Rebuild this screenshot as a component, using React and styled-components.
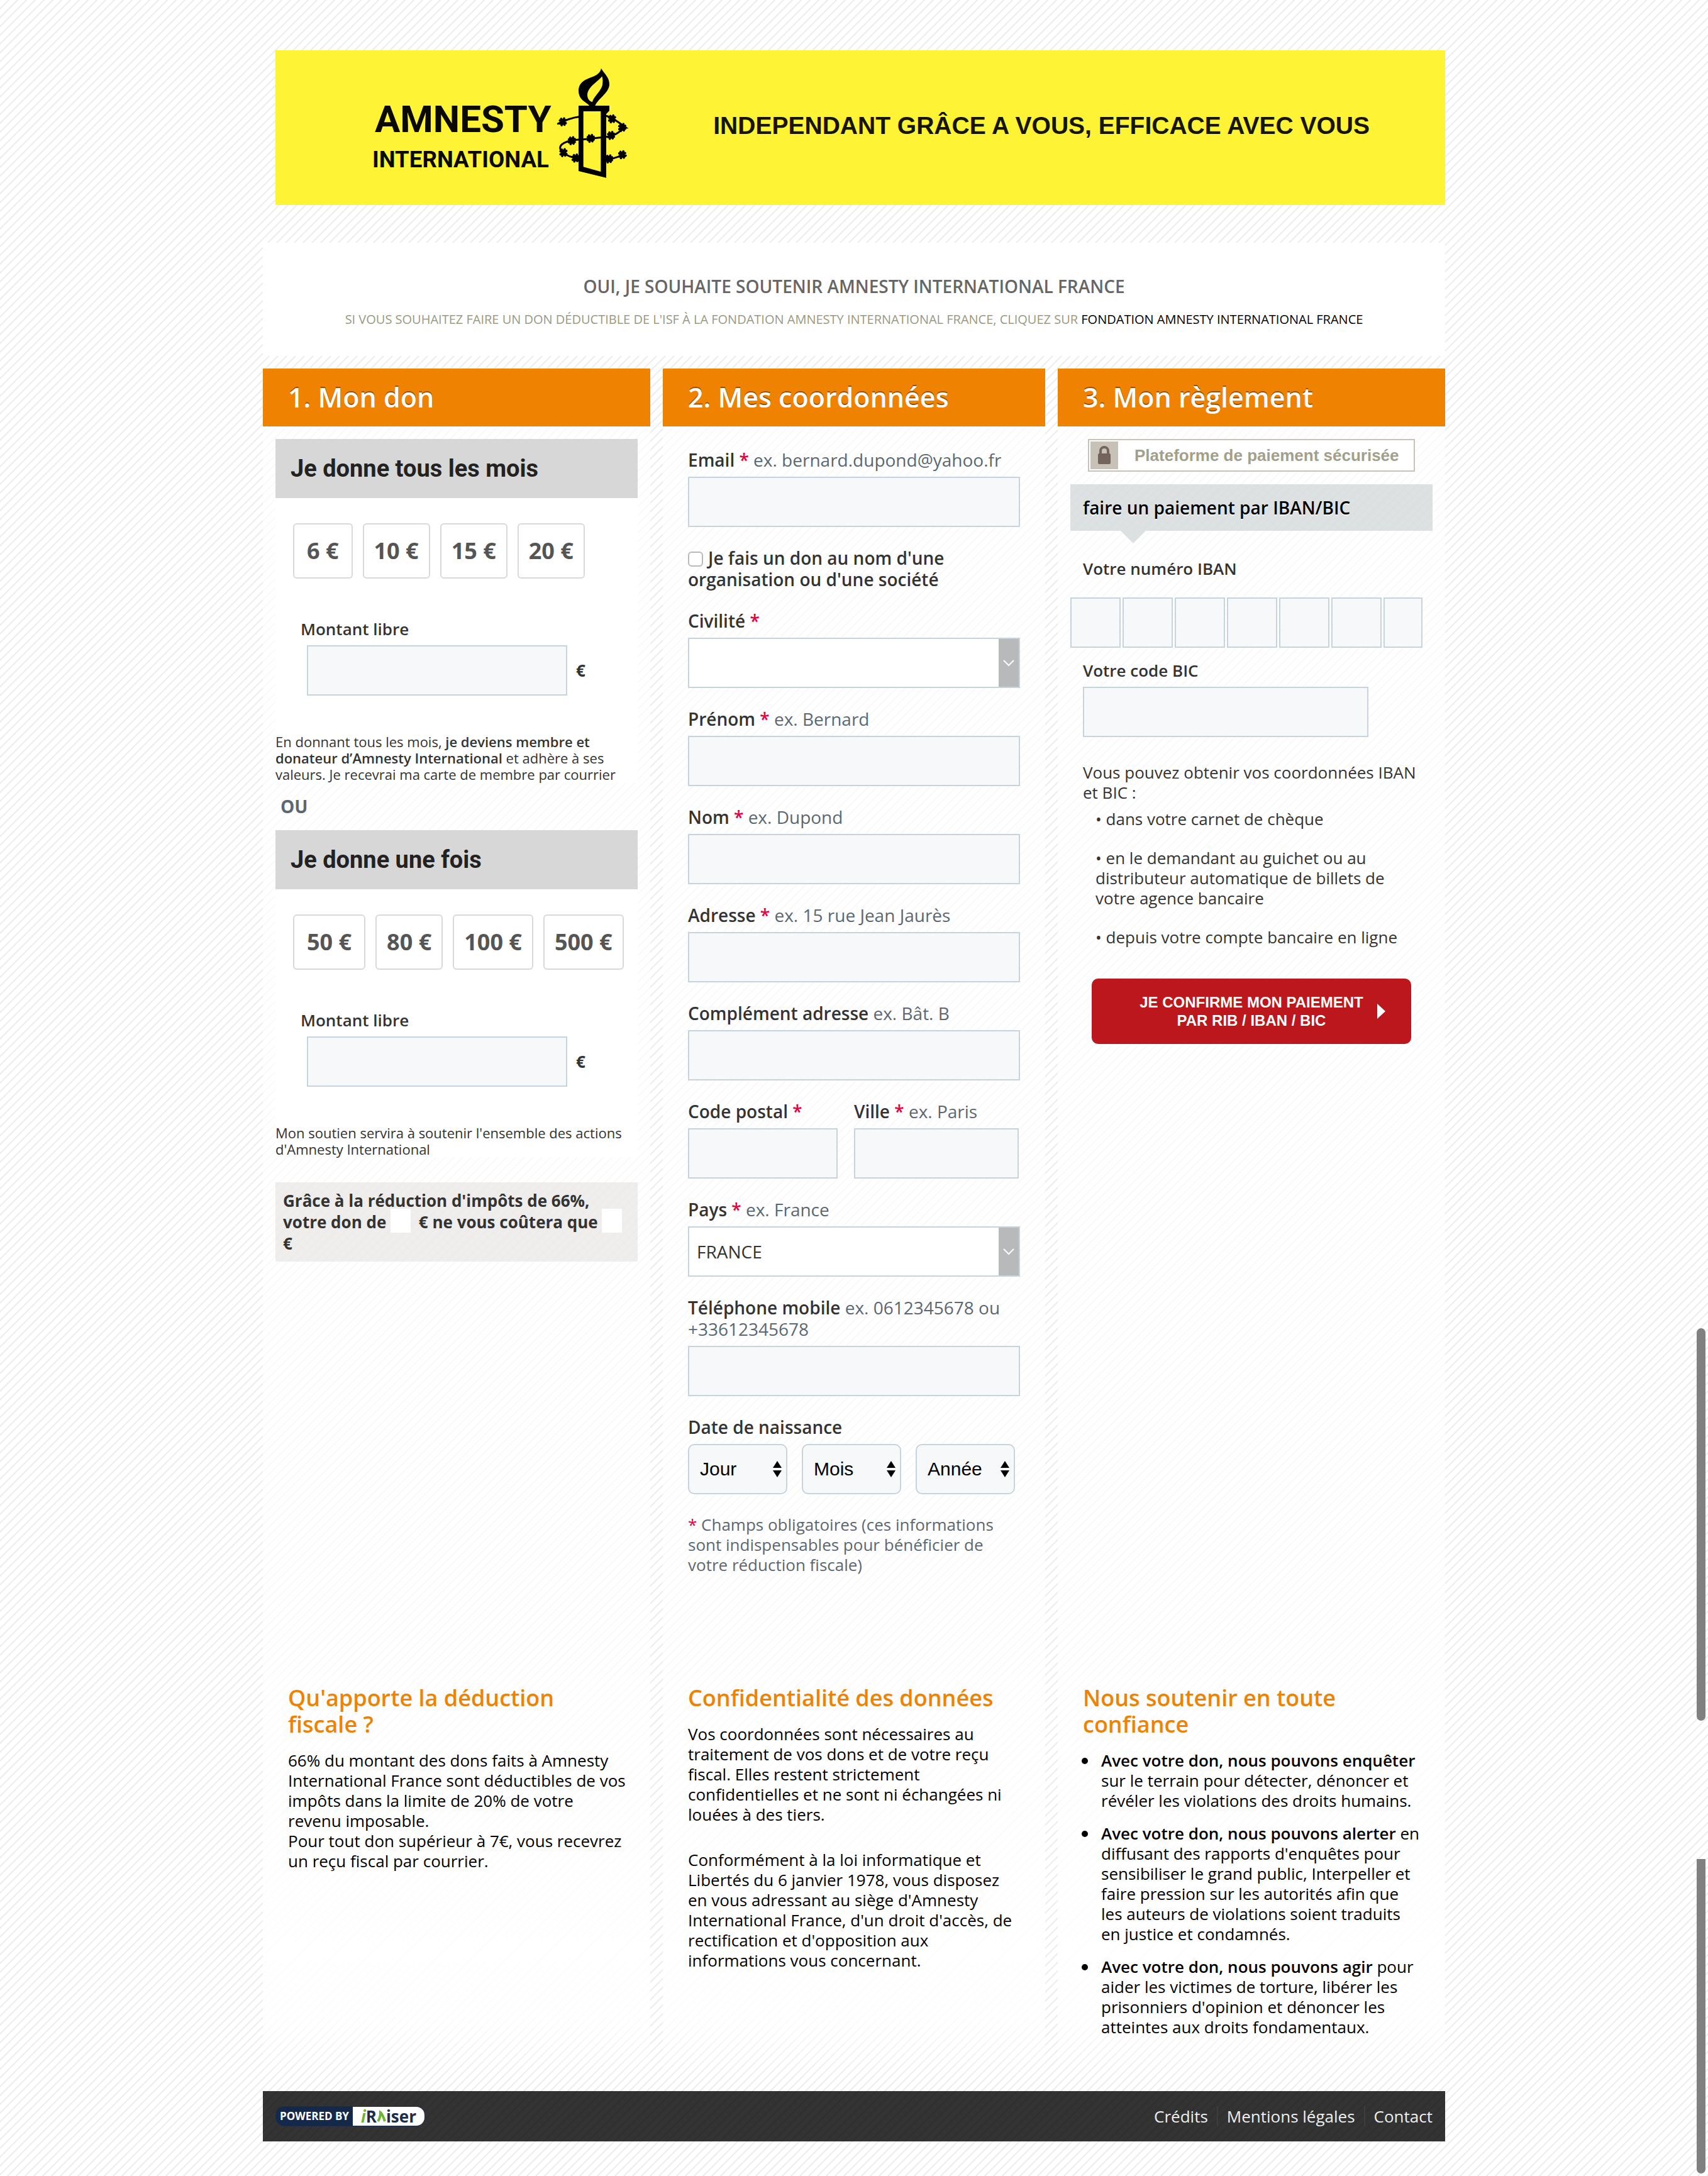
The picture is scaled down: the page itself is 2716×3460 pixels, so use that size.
import React from "react";
import styled, { createGlobalStyle, css } from "styled-components";

const sans = `"Open Sans", "Noto Sans", sans-serif`;
const arial = `"Liberation Sans", Arial, sans-serif`;

const GlobalStyle = createGlobalStyle`
  * { box-sizing: border-box; }
  body {
    margin: 0;
    color: #333;
    font-family: ${sans};
    font-size: 26px;
    line-height: 32px;
    background-color: #fff;
    background-image: linear-gradient(
      135deg,
      #ececec 0 3%,
      #fff 7% 43%,
      #ececec 47% 53%,
      #fff 57% 93%,
      #ececec 97% 100%
    );
    background-size: 14px 14px;
  }
  h1, h2, h3, p, ul, fieldset { margin: 0; padding: 0; }
  input, select, button { font: inherit; margin: 0; }
`;

const Page = styled.div`
  max-width: 1880px;
  margin: 0 auto;
  padding: 80px 0 54px;
`;

/* ---------- Banner ---------- */

const Banner = styled.header`
  display: flex;
  justify-content: space-between;
  align-items: flex-start;
  margin-left: 20px;
  height: 246px;
  padding: 20px 120px 0 142px;
  background: #fff335;
`;

const Slogan = styled.p`
  padding-top: 78px;
  font: bold 39px/44px ${arial};
  color: #151500;
`;

const barbs = [
  [945, 461], [1180, 447], [1228, 488], [1175, 526], [1078, 540],
  [988, 551], [948, 608], [1006, 634], [1165, 638], [1228, 618],
];

function AmnestyLogo() {
  return (
    <svg width="430" height="196" viewBox="0 180 1290 588" role="img" aria-label="Amnesty International">
      <g fontFamily="Roboto, sans-serif" fontWeight="bold" fill="#0a0a00">
        <text x="48" y="510" fontSize="180">AMNESTY</text>
        <text x="36" y="678" fontSize="110">INTERNATIONAL</text>
      </g>
      <path
        fill="#000"
        fillRule="evenodd"
        d="M1128 206 C1142 232 1168 248 1167 284 C1164 326 1108 352 1097 390 L1076 392 C1070 368 1020 366 1020 312 C1021 270 1056 258 1088 246 C1112 236 1124 224 1128 206 Z
           M1132 244 C1116 268 1062 294 1062 334 C1062 352 1074 366 1086 366 C1090 342 1130 312 1134 284 C1136 268 1136 256 1132 244 Z"
      />
      <path
        fill="#000"
        fillRule="evenodd"
        d="M1020 384 H1167 V408 L1152 424 V728 L1020 696 Z M1043 411 V676 L1126 699 V411 Z"
      />
      <g fill="none" stroke="#000" strokeWidth="9" strokeLinecap="round">
        <path d="M1022 437 C990 440 960 452 922 470" />
        <path d="M1150 432 C1180 440 1216 466 1246 489 C1222 490 1220 524 1150 533 L1040 545 C985 545 932 560 932 586 C934 612 980 630 1024 638" />
        <path d="M1148 640 C1184 644 1204 622 1246 622" />
        {barbs.map(([x, y]) => (
          <path key={`${x}-${y}`} strokeWidth="11" d={`M${x - 14} ${y + 8} L${x + 14} ${y - 8} M${x - 8} ${y - 14} L${x + 8} ${y + 14} M${x + 6} ${y - 16} L${x - 6} ${y + 16} M${x - 14} ${y - 6} L${x + 14} ${y + 6}`} />
        ))}
      </g>
    </svg>
  );
}

/* ---------- Intro ---------- */

const Intro = styled.section`
  margin: 60px 0 20px;
  padding: 50px 20px 44px;
  background: #fff;
  text-align: center;
  text-transform: uppercase;
`;

const IntroTitle = styled.h1`
  font-size: 28px;
  line-height: 38px;
  font-weight: 600;
  color: #666;
`;

const IntroNote = styled.p`
  margin-top: 20px;
  font-size: 20px;
  line-height: 28px;
  color: #999980;

  a { color: #000; text-decoration: none; }
`;

/* ---------- Columns ---------- */

const Columns = styled.div`
  display: grid;
  grid-template-columns: 616fr 608fr 616fr;
  column-gap: 20px;
`;

const Panel = styled.section`
  min-width: 0;
  background: rgba(255, 255, 255, 0.7);
`;

const PanelTitle = styled.h2`
  height: 92px;
  padding: 0 40px;
  background: #ef8200;
  color: #fff;
  font-size: 43px;
  line-height: 92px;
  font-weight: 600;
  text-shadow: 0 -2px 0 rgba(0, 0, 0, 0.4);
`;

const Info = styled.section`
  padding: 35px 36px 66px 40px;
  color: #000;
  background: linear-gradient(
    rgba(255, 255, 255, 0.7),
    rgba(255, 255, 255, 0.92) 70%,
    rgba(255, 255, 255, 0.85) 85%,
    rgba(255, 255, 255, 0)
  );

  h3 {
    margin-bottom: 20px;
    font-size: 36px;
    line-height: 42px;
    font-weight: 600;
    color: #ef8200;
  }
  p + p { margin-top: 40px; }
  strong { font-weight: 600; }
`;

const BulletList = styled.ul`
  display: grid;
  gap: 20px;
  padding-left: 29px;
  list-style: none;

  li::before {
    content: "";
    float: left;
    width: 10px;
    height: 10px;
    margin: 12px 0 0 -31px;
    border-radius: 50%;
    background: #000;
  }
`;

/* ---------- Shared form parts ---------- */

const boxed = css`
  height: 80px;
  border: 2px solid #c6d4de;
  border-radius: 0;
  background: #f7f8fa;
  outline: none;
`;

const TextInput = styled.input`
  ${boxed}
  display: block;
  width: ${(p) => p.$width || "100%"};
  padding: 0 12px;
  font-size: 28px;
  color: #333;
`;

const Required = styled.span`
  color: #e8003d;
`;

const Hint = styled.span`
  font-weight: 400;
  color: #5b6873;
`;

const Label = styled.label`
  display: block;
  margin-bottom: 10px;
  font-size: ${(p) => (p.$small ? "26px" : "28px")};
  line-height: ${(p) => (p.$small ? "32px" : "34px")};
  font-weight: 600;
  color: #333;
`;

/* ---------- Donation ---------- */

const DonationBody = styled.div`
  padding: 20px 20px 0;
`;

const DonationTitle = styled.h3`
  height: 94px;
  padding: 0 24px;
  background: #d7d7d7;
  color: #222;
  font: bold 38px/94px Roboto, sans-serif;
`;

const DonationCard = styled.div`
  padding-top: 40px;
  background: #fff;
`;

const Amounts = styled.div`
  display: flex;
  gap: 16px;
  padding-left: 28px;
`;

const AmountButton = styled.button`
  height: 88px;
  padding: 0 16px;
  border: 2px solid #d9d9d9;
  border-radius: 6px;
  background: #fff;
  color: #555;
  font-size: 36px;
  font-weight: 700;
  white-space: nowrap;

  &:first-child { padding: 0 20px; }
`;

const FreeAmount = styled.div`
  padding: 64px 40px 60px;
`;

const AmountRow = styled.div`
  display: flex;
  align-items: center;
  gap: 14px;
  padding-left: 10px;
  font-weight: 700;
`;

const SmallPrint = styled.p`
  font-size: 22px;
  line-height: 26px;

  strong { font-weight: 600; }
`;

const Or = styled.p`
  padding: 21px 8px;
  font-size: 28px;
  line-height: 34px;
  font-weight: 700;
  color: #5b6873;
`;

const TaxNote = styled.p`
  margin-top: 40px;
  padding: 12px;
  background: rgba(226, 224, 220, 0.55);
  font-weight: 700;
  line-height: 34px;
`;

const TaxValue = styled.input`
  width: 32px;
  height: 38px;
  margin: -4px 6px 0 0 !important;
  padding: 0;
  border: 0;
  background: #fff;
  vertical-align: bottom;
`;

function Donation({ id, title, amounts, children }) {
  return (
    <>
      <DonationTitle>{title}</DonationTitle>
      <DonationCard>
        <Amounts>
          {amounts.map((a) => (
            <AmountButton type="button" key={a}>{a} €</AmountButton>
          ))}
        </Amounts>
        <FreeAmount>
          <Label $small htmlFor={id}>Montant libre</Label>
          <AmountRow>
            <TextInput id={id} $width="414px" /> €
          </AmountRow>
        </FreeAmount>
        <SmallPrint>{children}</SmallPrint>
      </DonationCard>
    </>
  );
}

/* ---------- Contact details ---------- */

const Fields = styled.div`
  display: grid;
  gap: 32px;
  padding: 36px 40px 140px;
`;

const SplitRow = styled.div`
  display: grid;
  grid-template-columns: 238fr 262fr;
  gap: 26px;
  padding-right: 2px;
`;

const CheckLabel = styled.label`
  font-size: 28px;
  line-height: 34px;
  font-weight: 600;
`;

const Check = styled.input`
  appearance: none;
  width: 24px;
  height: 24px;
  margin: 0 8px 0 0 !important;
  border: 2px solid #b9b9b9;
  border-radius: 6px;
  background: #fff;
  vertical-align: -3px;
`;

const SelectWrap = styled.div`
  position: relative;
`;

const WideSelect = styled.select`
  ${boxed}
  appearance: none;
  display: block;
  width: 100%;
  padding: 0 44px 0 12px;
  background: #fff;
  font-size: 28px;
  color: #333;
`;

const SelectHandle = styled.span`
  position: absolute;
  top: 2px;
  right: 2px;
  bottom: 2px;
  display: flex;
  align-items: center;
  justify-content: center;
  width: 32px;
  background: #b8b9bb;
  pointer-events: none;
`;

const DateRow = styled.div`
  display: flex;
  gap: 23px;
`;

const DateSelect = styled.select`
  ${boxed}
  appearance: none;
  width: 158px;
  padding: 0 34px 0 17px;
  border-radius: 10px;
  font-family: ${arial};
  font-size: 30px;
  color: #000;
`;

const Spinner = styled.svg`
  position: absolute;
  top: 27px;
  right: 9px;
  pointer-events: none;
`;

const BirthFieldset = styled.fieldset`
  border: 0;
  min-width: 0;
`;

const Legend = styled.legend`
  padding: 0 0 10px;
  font-size: 28px;
  line-height: 34px;
  font-weight: 600;
`;

const Mandatory = styled.p`
  color: #5b6873;
`;

function Field({ id, label, required, hint }) {
  return (
    <div>
      <FieldLabel id={id} label={label} required={required} hint={hint} />
      <TextInput id={id} />
    </div>
  );
}

function FieldLabel({ id, label, required, hint }) {
  return (
    <Label htmlFor={id}>
      {label}
      {required && <Required> *</Required>}
      {hint && <Hint> {hint}</Hint>}
    </Label>
  );
}

function SelectField({ id, label, hint, value }) {
  return (
    <div>
      <FieldLabel id={id} label={label} required hint={hint} />
      <SelectWrap>
        <WideSelect id={id}>
          <option>{value}</option>
        </WideSelect>
        <SelectHandle>
          <svg width="18" height="12" viewBox="0 0 18 12" fill="none" stroke="#fff" strokeWidth="2">
            <path d="M1 2 L9 10 L17 2" />
          </svg>
        </SelectHandle>
      </SelectWrap>
    </div>
  );
}

function DatePart({ label }) {
  return (
    <SelectWrap>
      <DateSelect aria-label={label}>
        <option>{label}</option>
      </DateSelect>
      <Spinner width="14" height="26" viewBox="0 0 14 26">
        <path d="M7 0 L14 11 H0 Z M7 26 L14 15 H0 Z" fill="#000" />
      </Spinner>
    </SelectWrap>
  );
}

/* ---------- Payment ---------- */

const Payment = styled.div`
  padding: 20px 20px 0;
`;

const SecureBadge = styled.div`
  display: flex;
  align-items: center;
  width: 520px;
  height: 52px;
  margin: 0 auto 20px;
  padding: 2px;
  gap: 26px;
  border: 2px solid #c9c2b8;
  background: #fff;
  color: #a29f8b;
  font: bold 26px/44px ${arial};
`;

const LockTile = styled.span`
  display: flex;
  align-items: center;
  justify-content: center;
  width: 44px;
  height: 44px;
  background: #c8c1b7;
`;

const MethodBar = styled.h3`
  position: relative;
  height: 74px;
  padding: 0 20px;
  background: rgba(203, 209, 209, 0.65);
  color: #000;
  font-size: 28px;
  line-height: 74px;
  font-weight: 600;
  text-shadow: 0 2px 0 rgba(255, 255, 255, 0.6);

  &::after {
    content: "";
    position: absolute;
    top: 100%;
    left: 80px;
    border: 20px solid transparent;
    border-top-color: #dde0e0;
    border-bottom-width: 0;
  }
`;

const PaymentBody = styled.div`
  padding: 44px 20px 0;
`;

const IbanRow = styled.div`
  display: flex;
  gap: 3px;
  margin: 30px 0 20px -20px;
`;

const BankHelp = styled.div`
  margin-top: 40px;
`;

const HelpList = styled.ul`
  display: grid;
  gap: 30px;
  margin-top: 10px;
  padding: 0 0 0 20px;
  list-style: none;
`;

const ConfirmButton = styled.button`
  display: grid;
  grid-template-columns: 1fr auto 1fr;
  align-items: center;
  width: 508px;
  height: 104px;
  margin: 50px auto 0;
  border: 0;
  border-radius: 10px;
  background: #bb171c;
  color: #fff;
  font: bold 24px/29px ${arial};
  text-transform: uppercase;

  span { grid-column: 2; }
  svg { margin-left: 22px; }
`;

/* ---------- Footer ---------- */

const Footer = styled.footer`
  display: flex;
  justify-content: space-between;
  align-items: center;
  height: 80px;
  margin-top: 20px;
  padding: 0 20px;
  background: rgba(0, 0, 0, 0.8);
`;

const FooterNav = styled.nav`
  display: flex;

  a {
    color: #eee;
    text-decoration: none;
  }
  a + a {
    margin-left: 14px;
    padding-left: 14px;
    border-left: 2px solid #3d3d3d;
  }
`;

const PoweredBy = styled.a`
  display: flex;
  width: 238px;
  height: 32px;
  border: 1px solid #1a2c49;
  border-radius: 14px;
  background: #14294a;
  overflow: hidden;
  color: #fff;
  font-size: 17px;
  line-height: 30px;
  font-weight: 700;
  text-decoration: none;
  white-space: nowrap;
`;

const PoweredLabel = styled.span`
  flex: 1;
  text-align: center;
`;

const Raiser = styled.span`
  display: flex;
  align-items: center;
  justify-content: center;
  width: 114px;
  background: #fff;
  color: #1c2e4a;
  font-size: 26px;

  i { color: #6fb536; }
`;

const ScrollThumb = styled.div`
  position: absolute;
  top: ${(p) => p.$top}px;
  right: 4px;
  width: 14px;
  height: ${(p) => p.$height}px;
  border-radius: ${(p) => (p.$cut ? "0 0 7px 7px" : "7px")};
  background: #808080;
`;

const ibanWidths = ["80px", "80px", "80px", "80px", "80px", "80px", "62px"];

export default function App() {
  return (
    <>
      <GlobalStyle />
      <Page>
        <Banner>
          <AmnestyLogo />
          <Slogan>INDEPENDANT GRÂCE A VOUS, EFFICACE AVEC VOUS</Slogan>
        </Banner>

        <Intro>
          <IntroTitle>Oui, je souhaite soutenir Amnesty International France</IntroTitle>
          <IntroNote>
            Si vous souhaitez faire un don déductible de l'ISF à la Fondation Amnesty International France, cliquez sur{" "}
            <a href="#fondation">Fondation Amnesty International France</a>
          </IntroNote>
        </Intro>

        <Columns>
          <Panel>
            <PanelTitle>1. Mon don</PanelTitle>
            <DonationBody>
              <Donation id="monthly" title="Je donne tous les mois" amounts={[6, 10, 15, 20]}>
                En donnant tous les mois, <strong>je deviens membre et donateur d’Amnesty International</strong> et
                adhère à ses valeurs. Je recevrai ma carte de membre par courrier
              </Donation>
              <Or>OU</Or>
              <Donation id="once" title="Je donne une fois" amounts={[50, 80, 100, 500]}>
                Mon soutien servira à soutenir l'ensemble des actions d'Amnesty International
              </Donation>
              <TaxNote>
                Grâce à la réduction d'impôts de 66%, votre don de <TaxValue readOnly aria-label="Montant du don" /> €
                ne vous coûtera que <TaxValue readOnly aria-label="Coût réel" /> €
              </TaxNote>
            </DonationBody>
          </Panel>

          <Panel>
            <PanelTitle>2. Mes coordonnées</PanelTitle>
            <Fields>
              <Field id="email" label="Email" required hint="ex. bernard.dupond@yahoo.fr" />
              <CheckLabel>
                <Check type="checkbox" />
                Je fais un don au nom d'une organisation ou d'une société
              </CheckLabel>
              <SelectField id="civility" label="Civilité" value="" />
              <Field id="firstname" label="Prénom" required hint="ex. Bernard" />
              <Field id="lastname" label="Nom" required hint="ex. Dupond" />
              <Field id="address" label="Adresse" required hint="ex. 15 rue Jean Jaurès" />
              <Field id="address2" label="Complément adresse" hint="ex. Bât. B" />
              <SplitRow>
                <Field id="zip" label="Code postal" required />
                <Field id="city" label="Ville" required hint="ex. Paris" />
              </SplitRow>
              <SelectField id="country" label="Pays" hint="ex. France" value="FRANCE" />
              <Field id="phone" label="Téléphone mobile" hint="ex. 0612345678 ou +33612345678" />
              <BirthFieldset>
                <Legend>Date de naissance</Legend>
                <DateRow>
                  <DatePart label="Jour" />
                  <DatePart label="Mois" />
                  <DatePart label="Année" />
                </DateRow>
              </BirthFieldset>
              <Mandatory>
                <Required>*</Required> Champs obligatoires (ces informations sont indispensables pour bénéficier de
                votre réduction fiscale)
              </Mandatory>
            </Fields>
          </Panel>

          <Panel>
            <PanelTitle>3. Mon règlement</PanelTitle>
            <Payment>
              <SecureBadge>
                <LockTile>
                  <svg width="22" height="30" viewBox="0 0 22 30">
                    <path d="M5 14 V8 a6 6 0 0 1 12 0 V14" fill="none" stroke="#73655d" strokeWidth="4" />
                    <rect x="1" y="12" width="20" height="17" rx="2" fill="#73655d" />
                  </svg>
                </LockTile>
                Plateforme de paiement sécurisée
              </SecureBadge>
              <MethodBar>faire un paiement par IBAN/BIC</MethodBar>
              <PaymentBody>
                <Label $small htmlFor="iban-0">Votre numéro IBAN</Label>
                <IbanRow>
                  {ibanWidths.map((w, i) => (
                    <TextInput key={i} id={`iban-${i}`} aria-label={`IBAN ${i + 1}`} $width={w} />
                  ))}
                </IbanRow>
                <Label $small htmlFor="bic">Votre code BIC</Label>
                <TextInput id="bic" $width="454px" />
                <BankHelp>
                  <p>Vous pouvez obtenir vos coordonnées IBAN et BIC :</p>
                  <HelpList>
                    <li>• dans votre carnet de chèque</li>
                    <li>• en le demandant au guichet ou au distributeur automatique de billets de votre agence bancaire</li>
                    <li>• depuis votre compte bancaire en ligne</li>
                  </HelpList>
                </BankHelp>
              </PaymentBody>
              <ConfirmButton type="submit">
                <span>
                  Je confirme mon paiement
                  <br />
                  par RIB / IBAN / BIC
                </span>
                <svg width="13" height="24" viewBox="0 0 13 24">
                  <path d="M0 0 L13 12 L0 24 Z" fill="#fff" />
                </svg>
              </ConfirmButton>
            </Payment>
          </Panel>

          <Info>
            <h3>Qu'apporte la déduction fiscale ?</h3>
            <p>
              66% du montant des dons faits à Amnesty International France sont déductibles de vos impôts dans la
              limite de 20% de votre revenu imposable.
              <br />
              Pour tout don supérieur à 7€, vous recevrez un reçu fiscal par courrier.
            </p>
          </Info>

          <Info>
            <h3>Confidentialité des données</h3>
            <p>
              Vos coordonnées sont nécessaires au traitement de vos dons et de votre reçu fiscal. Elles restent
              strictement confidentielles et ne sont ni échangées ni louées à des tiers.
            </p>
            <p>
              Conformément à la loi informatique et Libertés du 6 janvier 1978, vous disposez en vous adressant au
              siège d'Amnesty International France, d'un droit d'accès, de rectification et d'opposition aux
              informations vous concernant.
            </p>
          </Info>

          <Info>
            <h3>Nous soutenir en toute confiance</h3>
            <BulletList>
              <li>
                <strong>Avec votre don, nous pouvons enquêter</strong> sur le terrain pour détecter, dénoncer et
                révéler les violations des droits humains.
              </li>
              <li>
                <strong>Avec votre don, nous pouvons alerter</strong> en diffusant des rapports d'enquêtes pour
                sensibiliser le grand public, Interpeller et faire pression sur les autorités afin que les auteurs de
                violations soient traduits en justice et condamnés.
              </li>
              <li>
                <strong>Avec votre don, nous pouvons agir</strong> pour aider les victimes de torture, libérer les
                prisonniers d'opinion et dénoncer les atteintes aux droits fondamentaux.
              </li>
            </BulletList>
          </Info>
        </Columns>

        <Footer>
          <PoweredBy href="#iraiser">
            <PoweredLabel>POWERED BY</PoweredLabel>
            <Raiser>
              <i>i</i>R
              <svg width="15" height="20" viewBox="0 0 15 20" fill="none" stroke="#6fb536" strokeWidth="4">
                <path d="M2 18 Q6 12 6 4 Q9 6 13 18" />
              </svg>
              iser
            </Raiser>
          </PoweredBy>
          <FooterNav>
            <a href="#credits">Crédits</a>
            <a href="#mentions">Mentions légales</a>
            <a href="#contact">Contact</a>
          </FooterNav>
        </Footer>
      </Page>
      <ScrollThumb $top={2112} $height={624} />
      <ScrollThumb $top={2956} $height={500} $cut />
    </>
  );
}
